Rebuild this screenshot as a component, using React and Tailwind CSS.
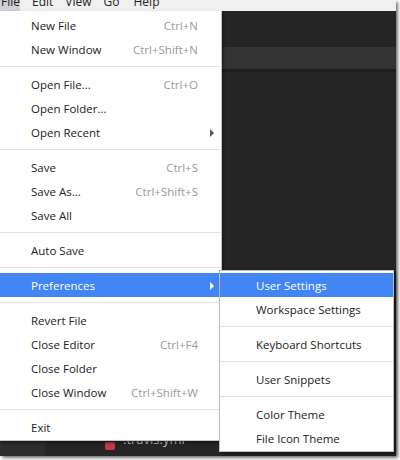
import React from "react";

const font = { fontFamily: '"Open Sans", "Noto Sans", sans-serif' };

const mainItems = [
  { label: "New File", sc: "Ctrl+N" },
  { label: "New Window", sc: "Ctrl+Shift+N" },
  "sep",
  { label: "Open File...", sc: "Ctrl+O" },
  { label: "Open Folder..." },
  { label: "Open Recent", arrow: true },
  "sep",
  { label: "Save", sc: "Ctrl+S" },
  { label: "Save As...", sc: "Ctrl+Shift+S" },
  { label: "Save All" },
  "sep",
  { label: "Auto Save" },
  "sep",
  { label: "Preferences", arrow: true, active: true },
  "sep",
  { label: "Revert File" },
  { label: "Close Editor", sc: "Ctrl+F4" },
  { label: "Close Folder" },
  { label: "Close Window", sc: "Ctrl+Shift+W" },
  "sep",
  { label: "Exit" },
];

const subItems = [
  { label: "User Settings", active: true },
  { label: "Workspace Settings" },
  "sep",
  { label: "Keyboard Shortcuts" },
  "sep",
  { label: "User Snippets" },
  "sep",
  { label: "Color Theme" },
  { label: "File Icon Theme" },
];

function Sep() {
  return (
    <div className="h-[11px] flex items-center">
      <div className="h-px w-full bg-[#e3e3e3]" />
    </div>
  );
}

function Arrow({ white }) {
  return (
    <div
      className={
        "w-0 h-0 border-y-[4px] border-y-transparent border-l-[4px] " +
        (white ? "border-l-white" : "border-l-[#555555]")
      }
    />
  );
}

export default function App() {
  return (
    <div className="w-[400px] h-[460px] bg-white overflow-hidden" style={font}>
      <div className="relative w-[396px] h-[456px] bg-[#252525] flex flex-col shadow-[2px_2px_3px_rgba(0,0,0,0.55)]">
        {/* menubar */}
        <div className="h-[11px] bg-[#f0f0f0] flex items-end overflow-hidden text-[12px] text-[#1e1e1e] leading-[12px]">
          <div className="w-[20px] h-[11px] bg-[#cdd0d4] flex items-end pl-[1px]">
            <span className="mb-[3px]">File</span>
          </div>
          <span className="ml-[12px] mb-[3px]">Edit</span>
          <span className="ml-[12px] mb-[3px]">View</span>
          <span className="ml-[12px] mb-[3px]">Go</span>
          <span className="ml-[14px] mb-[3px]">Help</span>
        </div>
        {/* editor body */}
        <div className="h-[36px] bg-[#252525]" />
        <div className="h-[22px] bg-[#333333]" />
        <div className="h-[3px] bg-[#1e1e1e]" />
        <div className="flex-1 bg-[#252525]" />
        <div className="h-[24px] flex">
          <div className="w-[45px] bg-[#2d2d2d]" />
          <div className="flex items-start pl-[60px] gap-[8px] text-[13px] leading-[13px] text-[#cccccc]">
            <div className="w-[10px] h-[8px] bg-[#c33a4a] rounded-[2px] mt-[10px]" />
            <span className="mt-[1px]">.travis.yml</span>
          </div>
        </div>

        {/* main menu */}
        <div className="absolute left-0 top-[11px] w-[222px] h-[430px] bg-white border-r border-b border-[#c4c4c4] py-[2px] text-[11.5px] shadow-[1px_2px_3px_rgba(0,0,0,0.45)]">
          {mainItems.map((it, i) =>
            it === "sep" ? (
              <Sep key={i} />
            ) : (
              <div
                key={i}
                className={
                  "h-[24px] flex items-center pl-[31px] pt-[2px] " +
                  (it.active ? "bg-[#4285f4] text-white" : "text-[#222222]")
                }
              >
                <span className="flex-1 whitespace-nowrap">{it.label}</span>
                {it.sc && (
                  <span className={it.active ? "text-white" : "text-[#999999]"}>
                    {it.sc}
                  </span>
                )}
                <div className="w-[23px] flex items-center pl-[12px]">
                  {it.arrow && <Arrow white={it.active} />}
                </div>
              </div>
            )
          )}
        </div>

        {/* submenu */}
        <div className="absolute left-[219px] top-[270px] w-[175px] h-[182px] bg-white border border-[#bdbdbd] py-[2px] text-[11.5px] shadow-[2px_2px_3px_rgba(0,0,0,0.5)]">
          {subItems.map((it, i) =>
            it === "sep" ? (
              <Sep key={i} />
            ) : (
              <div
                key={i}
                className={
                  "h-[24px] flex items-center pl-[36px] pt-[2px] whitespace-nowrap " +
                  (it.active ? "bg-[#4285f4] text-white" : "text-[#222222]")
                }
              >
                {it.label}
              </div>
            )
          )}
        </div>
      </div>
    </div>
  );
}
